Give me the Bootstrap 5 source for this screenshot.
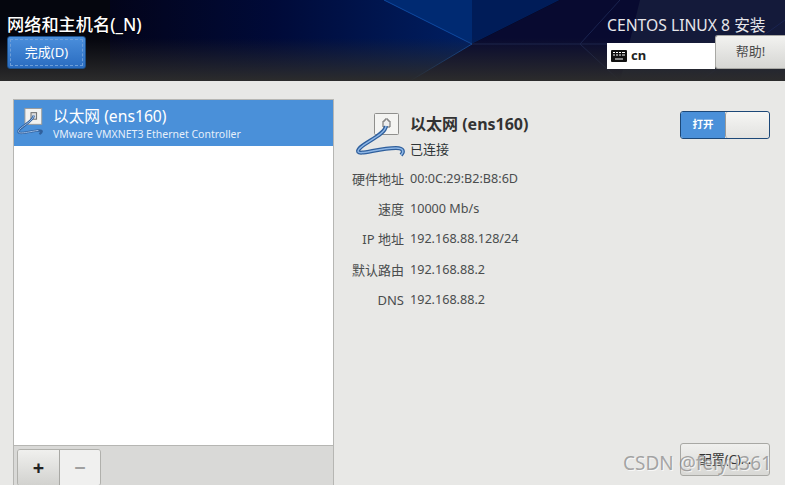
<!DOCTYPE html>
<html lang="zh-CN">

<head>
    <meta charset="UTF-8">
    <meta name="viewport" content="width=device-width, initial-scale=1.0">
    <title>网络和主机名</title>
    <link href="https://cdn.jsdelivr.net/npm/bootstrap@5.3.3/dist/css/bootstrap.min.css" rel="stylesheet">
    <style>
        html, body { height: 485px; overflow: hidden; }
        body { font-family: "Noto Sans", "Noto Sans CJK SC", sans-serif; background: #e8e8e6; color: #2e3436; font-size: 13px; position: relative; }

        .top-bar { height: 81px; position: relative; color: #fff; overflow: hidden; background: #05060e; }
        .top-lines { position: absolute; left: 0; top: 0; }
        .top-left { position: relative; padding: 13px 0 0 7px; }
        .top-right { position: relative; padding: 14px 0 0 0; width: 178px; }
        .page-title { font-size: 17.2px; line-height: 23px; font-weight: 500; text-shadow: 0 1px 1px #000; white-space: nowrap; }
        .done-btn { width: 79px; height: 33px; padding: 0; border: 1px solid #1c4f88; border-radius: 3px; color: #fff; font-size: 13px;
            background: linear-gradient(180deg, #4b8fdc, #2a6cc0); outline: 1px dashed #6f9fd8; outline-offset: -4px; }
        .install-title { font-size: 15.7px; line-height: 22px; color: #e6e6ea; white-space: nowrap; }
        .kb-box { width: 108px; height: 26px; margin-top: 7px; background: #fff; color: #222; font-weight: 700; font-size: 13px; padding-left: 4px; }
        .help-btn { width: 70px; height: 34px; margin-top: -1px; padding: 0; border: 1px solid #a8a8a4; border-right: 0; border-radius: 3px 0 0 3px; color: #4a4a4a; font-size: 13px;
            background: linear-gradient(180deg, #f2f2f0, #d6d6d3); }

        .main-area { height: 404px; padding: 18px 15px 0 13px; }
        .conn-panel { width: 321px; height: 386px; border: 1px solid #b6b6b3; border-bottom: 0; background: #fff; }
        .conn-item { height: 46px; background: #4a90d9; color: #fff; padding: 6px 0 0 3px; }
        .conn-name { font-size: 15.7px; line-height: 21px; }
        .conn-sub { font-size: 10.5px; line-height: 14px; color: #e6effa; }
        .conn-tools { height: 40px; background: #d9d9d7; border-top: 1px solid #b6b6b3; padding: 3px 0 0 3px; }
        .tool-group { width: 84px; height: 37px; border: 1px solid #b0b0ac; border-radius: 3px; overflow: hidden; }
        .tool-add { width: 42px; border-right: 1px solid #a8a8a4; background: linear-gradient(180deg, #f0f0ee, #d2d2cf); color: #222; font-size: 20px; font-weight: 700; }
        .tool-del { flex: 1; background: #f0f0ef; color: #a0a0a0; font-size: 20px; font-weight: 700; }

        .detail-panel { padding-left: 18px; }
        .detail-head { height: 68px; padding-top: 13px; }
        .detail-icon { width: 58px; flex: none; }
        .detail-name { font-size: 16px; line-height: 24px; font-weight: 700; color: #333; }
        .detail-state { font-size: 13px; line-height: 20px; margin-top: 3px; }
        .switch-box { width: 90px; height: 28px; margin-top: -1px; border: 1px solid #1c4878; border-radius: 3px; overflow: hidden; }
        .switch-on { width: 44px; background: #4a90d9; color: #fff; font-size: 10.5px; font-weight: 700; }
        .switch-knob { flex: 1; background: linear-gradient(180deg, #f6f6f4, #e2e2e0); border-left: 1px solid #9a9a98; border-radius: 3px; }
        .detail-grid { display: grid; grid-template-columns: 52px 1fr; column-gap: 6px; grid-auto-rows: 30.2px; margin-top: 2px; font-size: 12.6px; line-height: 20px; color: #4a4d4e; }
        .detail-grid dt { font-weight: 400; text-align: right; font-size: 13px; white-space: nowrap; }
        .detail-grid dd { margin: 0; }
        .config-btn { position: absolute; left: 680px; top: 443px; width: 90px; height: 33px; padding: 0; border: 1px solid #a8a8a4; border-radius: 3px; font-size: 13px; color: #333;
            background: linear-gradient(180deg, #f0f0ee, #d8d8d5); }
        .csdn-mark { position: absolute; left: 623px; top: 451px; font-size: 19px; line-height: 24px; color: rgba(130,130,130,.7); text-shadow: 1px 1px 0 rgba(255,255,255,.7); white-space: nowrap; }
    </style>
</head>

<body>
    <header class="top-bar d-flex justify-content-between">
        <svg class="top-lines" width="785" height="81" viewBox="0 0 785 81" fill="none">
            <defs>
                <linearGradient id="leftBlue" x1="110" y1="0" x2="472" y2="0" gradientUnits="userSpaceOnUse">
                    <stop offset="0" stop-color="#03041a" />
                    <stop offset=".45" stop-color="#000a38" />
                    <stop offset="1" stop-color="#001f62" />
                </linearGradient>
                <linearGradient id="fadeDown" x1="0" y1="38" x2="0" y2="81" gradientUnits="userSpaceOnUse">
                    <stop offset="0" stop-color="#2a2a2a" stop-opacity="0" />
                    <stop offset="1" stop-color="#2c2c2c" />
                </linearGradient>
            </defs>
            <path d="M110 0H472V44L410 81H110Z" fill="url(#leftBlue)" />
            <path d="M384 0H472V44Z" fill="#002a72" />
            <path d="M472 0H560L472 44Z" fill="#001c58" />
            <path d="M560 0H785V81H410L472 44Z" fill="#080a30" />
            <path d="M640 0H785V81H620Z" fill="#141a3a" />
            <path d="M384 0L472 44L410 81" stroke="#0f4aa0" />
            <path d="M472 44H580L620 0M580 44L620 81M580 44H785M700 81L785 20" stroke="#1a2450" />
            <rect width="785" height="81" fill="url(#fadeDown)" />
        </svg>
        <div class="top-left">
            <div class="page-title">网络和主机名(_N)</div>
            <button type="button" class="done-btn btn d-block">完成(D)</button>
        </div>
        <div class="top-right">
            <div class="install-title">CENTOS LINUX 8 安装</div>
            <div class="d-flex align-items-start">
                <div class="kb-box d-flex align-items-center gap-1">
                    <svg width="16" height="12" viewBox="0 0 16 12">
                        <rect width="16" height="12" rx="1" fill="#111" />
                        <path d="M2 2.500h2M5 2.500h2M8 2.500h2M11 2.500h3M2 5h2M5 5h2M8 5h2M11 5h3M4 9h8" stroke="#fff" stroke-width="1.2" />
                    </svg>
                    cn
                </div>
                <button type="button" class="help-btn btn">帮助!</button>
            </div>
        </div>
    </header>

    <main class="main-area d-flex">
        <section class="conn-panel d-flex flex-column">
            <div class="conn-item d-flex gap-2">
                <svg class="flex-shrink-0" width="28" height="32" viewBox="0 0 30 32" fill="none">
                    <rect x="8.500" y="1.500" width="18" height="17" fill="#f2f2f0" stroke="#9a9a98" />
                    <rect x="15" y="6" width="6" height="7" fill="#ddd" stroke="#666" />
                    <path d="M18 9 C17 16 3 21 1.500 26 C1 30 14 26 23 25 C28 25 27 27 24 29" stroke="#2f5f9c" stroke-width="2.500" />
                    <path d="M18 9 C17 16 3 21 1.500 26 C1 30 14 26 23 25" stroke="#9fc0e8" stroke-width="1" />
                </svg>
                <div>
                    <div class="conn-name">以太网 (ens160)</div>
                    <div class="conn-sub">VMware VMXNET3 Ethernet Controller</div>
                </div>
            </div>
            <div class="flex-grow-1"></div>
            <div class="conn-tools">
                <div class="tool-group d-flex">
                    <div class="tool-add d-flex align-items-center justify-content-center">+</div>
                    <div class="tool-del d-flex align-items-center justify-content-center">−</div>
                </div>
            </div>
        </section>

        <section class="detail-panel flex-grow-1">
            <div class="detail-head d-flex">
                <svg class="detail-icon" width="58" height="48" viewBox="0 0 58 48" fill="none">
                    <rect x="22.500" y="1.500" width="24" height="21" rx="1" fill="#f4f4f2" stroke="#8f8f8d" />
                    <path d="M31 15V9h2V7h3v2h2v6z" fill="#eee" stroke="#666" />
                    <path d="M34 14 C33 24 7 32 6 39 C6 44 26 36 44 36 C52 36 52 40 49 43" stroke="#2f5f9c" stroke-width="4" />
                    <path d="M34 14 C33 24 7 32 6 39 C6 44 26 36 44 36 C52 36 52 40 49 43" stroke="#8db6e6" stroke-width="1.500" />
                </svg>
                <div class="flex-grow-1">
                    <div class="detail-name">以太网 (ens160)</div>
                    <div class="detail-state">已连接</div>
                </div>
                <div class="switch-box d-flex">
                    <div class="switch-on d-flex align-items-center justify-content-center">打开</div>
                    <div class="switch-knob"></div>
                </div>
            </div>
            <dl class="detail-grid mb-0">
                <dt>硬件地址</dt><dd>00:0C:29:B2:B8:6D</dd>
                <dt>速度</dt><dd>10000 Mb/s</dd>
                <dt>IP 地址</dt><dd>192.168.88.128/24</dd>
                <dt>默认路由</dt><dd>192.168.88.2</dd>
                <dt>DNS</dt><dd>192.168.88.2</dd>
            </dl>
        </section>
    </main>

    <button type="button" class="config-btn btn">配置(C)...</button>
    <div class="csdn-mark">CSDN @feiyu361</div>

    <script src="https://cdn.jsdelivr.net/npm/bootstrap@5.3.3/dist/js/bootstrap.bundle.min.js"></script>
</body>

</html>
